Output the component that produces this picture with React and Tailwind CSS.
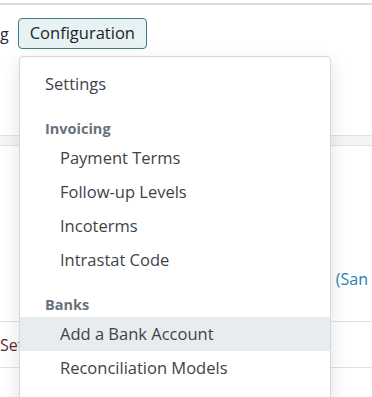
const items = [
  { type: "item", label: "Settings", level: 0 },
  { type: "header", label: "Invoicing" },
  { type: "item", label: "Payment Terms", level: 1 },
  { type: "item", label: "Follow-up Levels", level: 1 },
  { type: "item", label: "Incoterms", level: 1 },
  { type: "item", label: "Intrastat Code", level: 1 },
  { type: "header", label: "Banks" },
  { type: "item", label: "Add a Bank Account", level: 1, active: true },
  { type: "item", label: "Reconciliation Models", level: 1 },
];

function MenuEntry({ entry }) {
  if (entry.type === "header") {
    return (
      <div className="mt-4 flex h-6 items-center pl-[25px] text-[14.5px] font-bold text-[#6b7178]">
        {entry.label}
      </div>
    );
  }
  return (
    <div
      className={
        "flex h-[34px] items-center text-[16.5px] text-[#3d4349] " +
        (entry.level === 1 ? "pl-10 " : "pl-[25px] ") +
        (entry.active ? "bg-[#e9ecef]" : "")
      }
    >
      {entry.label}
    </div>
  );
}

export default function App() {
  return (
    <div className="relative h-[397px] w-[372px] overflow-hidden bg-white font-['Open_Sans',sans-serif]">
      <div className="mt-[3px] h-[2px] bg-[#dcdcdc]" />

      <div className="flex h-[130px] items-start gap-[9px] pt-[13px]">
        <span className="mt-[4px] text-[16px] text-[#1f2937]">g</span>
        <button className="h-[31px] rounded-[4px] border border-[#3f7f83] bg-[#e6f2f3] px-[11px] text-[16.5px] text-[#1c1f23]">
          Configuration
        </button>
      </div>

      <div className="h-[11px] border-y border-[#dee2e6] bg-[#f3f4f6]" />

      <div className="flex flex-col bg-white pt-[122px]">
        <div className="mr-[4px] self-end text-[16px] leading-[22px] text-[#2a7fae]">(San</div>
        <div className="mt-[31px] flex h-[47px] items-center border-y border-[#dee2e6] text-[16px] text-[#5a2a2e]">
          Settings
        </div>
      </div>

      <div className="absolute left-[19px] top-[56px] h-[360px] w-[312px] rounded-[4px] border border-[#d6d8db] bg-white pt-[10px] shadow-[0_6px_18px_rgba(0,0,0,0.12)]">
        {items.map((entry) => (
          <MenuEntry key={entry.label} entry={entry} />
        ))}
      </div>
    </div>
  );
}
